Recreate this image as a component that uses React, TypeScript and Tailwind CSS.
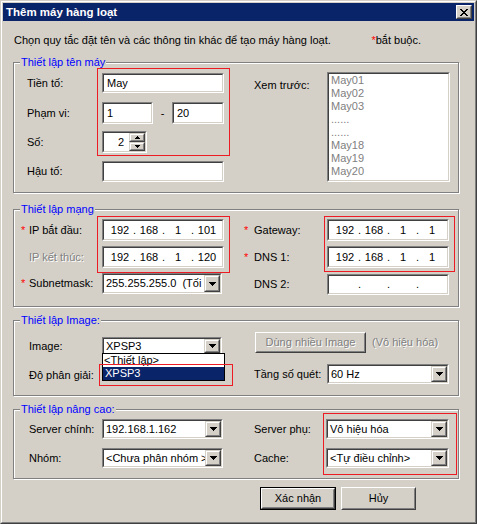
import { Fragment, type ReactNode } from 'react'

type Box = { className?: string; children?: ReactNode }

// sunken 3D field (edit boxes, lists, combos)
function Sunken({ className = '', children }: Box) {
  return (
    <div className={`border border-t-[#808080] border-l-[#808080] border-r-white border-b-white ${className}`}>
      <div className="h-full overflow-hidden border border-t-[#404040] border-l-[#404040] border-r-[#d4d0c8] border-b-[#d4d0c8] bg-white">
        {children}
      </div>
    </div>
  )
}

// small raised button used inside combos / spinners
function ArrowBtn({ className = '', children }: Box) {
  return (
    <div className={`border border-t-[#d4d0c8] border-l-[#d4d0c8] border-r-[#404040] border-b-[#404040] bg-[#d4d0c8] ${className}`}>
      <div className="flex h-full items-center justify-center border border-t-white border-l-white border-r-[#808080] border-b-[#808080]">
        {children}
      </div>
    </div>
  )
}

function PushButton({ className = '', children }: Box) {
  return (
    <div className={`border border-t-white border-l-white border-r-[#404040] border-b-[#404040] bg-[#d4d0c8] ${className}`}>
      <div className="flex h-full items-center justify-center border border-t-[#d4d0c8] border-l-[#d4d0c8] border-r-[#808080] border-b-[#808080]">
        {children}
      </div>
    </div>
  )
}

function DownArrow() {
  return (
    <svg width="7" height="4" viewBox="0 0 7 4" shapeRendering="crispEdges">
      <path d="M0 0h7v1h-1v1h-1v1h-1v1h-1v-1h-1v-1h-1v-1h-1z" fill="#000" />
    </svg>
  )
}

function SmallUp() {
  return (
    <svg width="5" height="3" viewBox="0 0 5 3" shapeRendering="crispEdges">
      <path d="M2 0h1v1h1v1h1v1h-5v-1h1v-1h1z" fill="#000" />
    </svg>
  )
}

function SmallDown() {
  return (
    <svg width="5" height="3" viewBox="0 0 5 3" shapeRendering="crispEdges">
      <path d="M0 0h5v1h-1v1h-1v1h-1v-1h-1v-1h-1z" fill="#000" />
    </svg>
  )
}

function Combo({ className = '', text, children }: Box & { text: string }) {
  return (
    <div className="relative">
      <Sunken className={className}>
        <div className="flex h-full">
          <div className="flex flex-1 items-center overflow-hidden whitespace-pre pl-[2px]">{text}</div>
          <ArrowBtn className="h-full w-[16px] shrink-0">
            <DownArrow />
          </ArrowBtn>
        </div>
      </Sunken>
      {children}
    </div>
  )
}

function IpBox({ parts, className = '' }: { parts: string[]; className?: string }) {
  return (
    <Sunken className={className}>
      <div className="flex h-full items-center pl-[4px]">
        {parts.map((p, i) => (
          <Fragment key={i}>
            <span className="w-[24px] text-center">{p}</span>
            {i < 3 && <span className="w-[5px] text-center">.</span>}
          </Fragment>
        ))}
      </div>
    </Sunken>
  )
}

function Group({ title, className = '', children }: Box & { title: string }) {
  return (
    <div className={`relative w-[446px] border border-[#808080] shadow-[inset_1px_1px_0_#fff,1px_1px_0_#fff] ${className}`}>
      <div className="-mt-[7px] mb-[-6px] ml-[6px] h-[13px] w-fit bg-[#d4d0c8] px-[1px] text-[#0000ff]">{title}</div>
      {children}
    </div>
  )
}

function RedBox({ className = '' }: { className?: string }) {
  return <div className={`pointer-events-none absolute z-20 border border-[#ed1c24] ${className}`} />
}

const Star = () => <span className="w-[8px] shrink-0 text-[#ff0000]">*</span>
const NoStar = () => <span className="w-[8px] shrink-0" />
const disabled = 'text-[#808080] [text-shadow:1px_1px_0_#fff]'

export default function App() {
  return (
    <div className="h-[524px] w-[477px] font-['Liberation_Sans',Arial,sans-serif] text-[11px] leading-[13px] text-black">
      <div className="h-full border border-t-[#d4d0c8] border-l-[#d4d0c8] border-r-[#404040] border-b-[#404040]">
        <div className="h-full border border-t-white border-l-white border-r-[#808080] border-b-[#808080] bg-[#d4d0c8] p-[1px]">
          {/* title bar */}
          <div className="flex h-[18px] items-center justify-between bg-[#0a246a] pl-[3px] pr-[2px]">
            <span className="text-[11.5px] font-bold text-white">Thêm máy hàng loạt</span>
            <PushButton className="h-[14px] w-[16px]">
              <svg width="8" height="7" viewBox="0 0 8 7" shapeRendering="crispEdges">
                <path
                  d="M0 0h2v1h-2zM6 0h2v1h-2zM1 1h2v1h-2zM5 1h2v1h-2zM2 2h4v1h-4zM3 3h2v1h-2zM2 4h4v1h-4zM1 5h2v1h-2zM5 5h2v1h-2zM0 6h2v1h-2zM6 6h2v1h-2z"
                  fill="#000"
                />
              </svg>
            </PushButton>
          </div>

          <div className="pl-[10px]">
            <div className="mt-[13px] flex w-[408px] justify-between pl-[1px]">
              <span>Chọn quy tắc đặt tên và các thông tin khác để tạo máy hàng loạt.</span>
              <span>
                <span className="text-[#ff0000]">*</span>bắt buộc.
              </span>
            </div>

            {/* Thiết lập tên máy */}
            <Group title="Thiết lập tên máy" className="mt-[15px] h-[131px]">
              <RedBox className="left-[83px] top-[5px] h-[88px] w-[133px]" />
              <div className="flex items-start">
                <div className="w-[230px] shrink-0 pt-[10px]">
                  <div className="flex h-[20px] items-center">
                    <span className="w-[88px] shrink-0 pl-[13px]">Tiền tố:</span>
                    <Sunken className="h-[20px] w-[122px]">
                      <div className="flex h-full items-center pl-[3px]">May</div>
                    </Sunken>
                  </div>
                  <div className="mt-[9px] flex h-[22px] items-center">
                    <span className="w-[88px] shrink-0 pl-[13px]">Phạm vi:</span>
                    <Sunken className="h-[22px] w-[51px]">
                      <div className="flex h-full items-center pl-[3px]">1</div>
                    </Sunken>
                    <span className="w-[19px] text-center">-</span>
                    <Sunken className="h-[22px] w-[52px]">
                      <div className="flex h-full items-center pl-[3px]">20</div>
                    </Sunken>
                  </div>
                  <div className="mt-[7px] flex h-[22px] items-center">
                    <span className="w-[88px] shrink-0 pl-[13px]">Số:</span>
                    <Sunken className="h-[22px] w-[45px]">
                      <div className="flex h-full">
                        <div className="flex flex-1 items-center justify-end pr-[5px]">2</div>
                        <div className="flex w-[16px] flex-col">
                          <ArrowBtn className="h-[9px]">
                            <SmallUp />
                          </ArrowBtn>
                          <ArrowBtn className="h-[9px]">
                            <SmallDown />
                          </ArrowBtn>
                        </div>
                      </div>
                    </Sunken>
                  </div>
                  <div className="mt-[8px] flex h-[21px] items-center">
                    <span className="w-[88px] shrink-0 pl-[13px]">Hậu tố:</span>
                    <Sunken className="h-[21px] w-[122px]" />
                  </div>
                </div>
                <div className="flex items-start pt-[9px]">
                  <span className="w-[83px] shrink-0 pl-[10px] pt-[7px]">Xem trước:</span>
                  <Sunken className="h-[110px] w-[123px]">
                    <div className="pl-[2px] text-[#808080]">
                      {['May01', 'May02', 'May03', '......', '......', 'May18', 'May19', 'May20'].map((m, i) => (
                        <div key={i}>{m}</div>
                      ))}
                    </div>
                  </Sunken>
                </div>
              </div>
            </Group>

            {/* Thiết lập mạng */}
            <Group title="Thiết lập mạng" className="mt-[16px] h-[98px]">
              <RedBox className="left-[83px] top-[6px] h-[57px] w-[133px]" />
              <RedBox className="left-[310px] top-[6px] h-[56px] w-[131px]" />
              <div className="flex items-start">
                <div className="w-[230px] shrink-0 pt-[9px]">
                  <div className="flex h-[22px] items-center">
                    <span className="flex w-[88px] shrink-0 pl-[7px]">
                      <Star />
                      IP bắt đầu:
                    </span>
                    <IpBox parts={['192', '168', '1', '101']} className="h-[22px] w-[122px]" />
                  </div>
                  <div className="mt-[5px] flex h-[22px] items-center">
                    <span className="flex w-[88px] shrink-0 pl-[7px]">
                      <NoStar />
                      <span className={disabled}>IP kết thúc:</span>
                    </span>
                    <IpBox parts={['192', '168', '1', '120']} className="h-[22px] w-[122px]" />
                  </div>
                  <div className="mt-[5px] flex h-[21px] items-center">
                    <span className="flex w-[88px] shrink-0 pl-[7px]">
                      <Star />
                      Subnetmask:
                    </span>
                    <Combo className="h-[21px] w-[120px]" text="255.255.255.0  (Tối ưu)" />
                  </div>
                </div>
                <div className="pt-[9px]">
                  <div className="flex h-[22px] items-center">
                    <span className="flex w-[83px] shrink-0">
                      <span className="w-[10px] shrink-0 text-[#ff0000]">*</span>
                      Gateway:
                    </span>
                    <IpBox parts={['192', '168', '1', '1']} className="h-[22px] w-[122px]" />
                  </div>
                  <div className="mt-[5px] flex h-[22px] items-center">
                    <span className="flex w-[83px] shrink-0">
                      <span className="w-[10px] shrink-0 text-[#ff0000]">*</span>
                      DNS 1:
                    </span>
                    <IpBox parts={['192', '168', '1', '1']} className="h-[22px] w-[122px]" />
                  </div>
                  <div className="mt-[6px] flex h-[21px] items-center">
                    <span className="w-[83px] shrink-0 pl-[10px]">DNS 2:</span>
                    <IpBox parts={['', '', '', '']} className="h-[21px] w-[122px]" />
                  </div>
                </div>
              </div>
            </Group>

            {/* Thiết lập Image */}
            <Group title="Thiết lập Image:" className="mt-[13px] h-[76px]">
              <RedBox className="left-[85px] top-[43px] h-[22px] w-[134px]" />
              <div className="flex items-start">
                <div className="w-[230px] shrink-0 pt-[16px]">
                  <div className="flex h-[18px] items-center">
                    <span className="flex w-[88px] shrink-0 pl-[7px]">
                      <NoStar />
                      Image:
                    </span>
                    <Combo className="h-[18px] w-[120px]" text="XPSP3">
                      <div className="absolute left-0 top-[16px] z-10 w-[123px] border border-black bg-white">
                        <div className="h-[13px] pl-[1px]">&lt;Thiết lập&gt;</div>
                        <div className="h-[13px] bg-[#0a246a] pl-[2px] text-white">XPSP3</div>
                      </div>
                    </Combo>
                  </div>
                  <div className="mt-[14px] flex h-[13px] items-center">
                    <span className="flex w-[88px] shrink-0 pl-[7px]">
                      <NoStar />
                      Độ phân giải:
                    </span>
                  </div>
                </div>
                <div className="pt-[11px]">
                  <div className="flex h-[21px] items-center pl-[11px]">
                    <PushButton className="h-[21px] w-[111px]">
                      <span className={disabled}>Dùng nhiều Image</span>
                    </PushButton>
                    <span className={`ml-[6px] ${disabled}`}>(Vô hiệu hóa)</span>
                  </div>
                  <div className="mt-[11px] flex h-[20px] items-center">
                    <span className="w-[83px] shrink-0 pl-[10px]">Tầng số quét:</span>
                    <Combo className="h-[20px] w-[122px]" text="60 Hz" />
                  </div>
                </div>
              </div>
            </Group>

            {/* Thiết lập nâng cao */}
            <Group title="Thiết lập nâng cao:" className="mt-[13px] h-[70px]">
              <RedBox className="left-[309px] top-[3px] h-[62px] w-[134px]" />
              <div className="flex items-start">
                <div className="w-[230px] shrink-0 pt-[9px]">
                  <div className="flex h-[20px] items-center">
                    <span className="flex w-[88px] shrink-0 pl-[7px]">
                      <NoStar />
                      Server chính:
                    </span>
                    <Combo className="h-[20px] w-[121px]" text="192.168.1.162" />
                  </div>
                  <div className="mt-[9px] flex h-[20px] items-center">
                    <span className="flex w-[88px] shrink-0 pl-[7px]">
                      <NoStar />
                      Nhóm:
                    </span>
                    <Combo className="h-[20px] w-[121px]" text="<Chưa phân nhóm >" />
                  </div>
                </div>
                <div className="pt-[9px]">
                  <div className="flex h-[20px] items-center">
                    <span className="w-[82px] shrink-0 pl-[10px]">Server phụ:</span>
                    <Combo className="h-[20px] w-[123px]" text="Vô hiệu hóa" />
                  </div>
                  <div className="mt-[9px] flex h-[20px] items-center">
                    <span className="w-[82px] shrink-0 pl-[10px]">Cache:</span>
                    <Combo className="h-[20px] w-[123px]" text="<Tự điều chỉnh>" />
                  </div>
                </div>
              </div>
            </Group>

            <div className="mt-[8px] flex gap-[5px] pl-[247px]">
              <div className="h-[23px] w-[76px] border border-black">
                <PushButton className="h-full w-full">Xác nhận</PushButton>
              </div>
              <PushButton className="h-[23px] w-[75px]">Hủy</PushButton>
            </div>
          </div>
        </div>
      </div>
    </div>
  )
}
